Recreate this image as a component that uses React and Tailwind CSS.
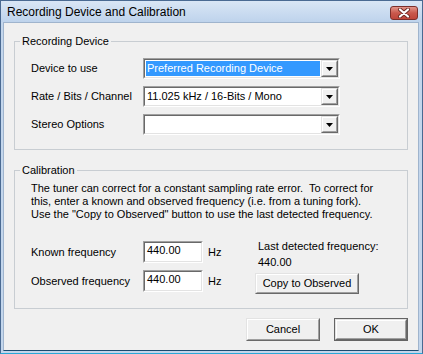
import React from "react";

const font = "font-['Liberation_Sans',Arial,sans-serif] text-[11px] leading-[13px] text-black";

function Sunken({ className = "", children }) {
  return (
    <div className={`border border-t-[#a0a0a0] border-l-[#a0a0a0] border-r-white border-b-white ${className}`}>
      <div className="h-full border border-t-[#696969] border-l-[#696969] border-r-[#e3e3e3] border-b-[#e3e3e3] bg-white flex">
        {children}
      </div>
    </div>
  );
}

function Raised({ className = "", children }) {
  return (
    <div className={`border border-t-[#e3e3e3] border-l-[#e3e3e3] border-r-[#696969] border-b-[#696969] bg-[#f0f0f0] ${className}`}>
      <div className="h-full border border-t-white border-l-white border-r-[#a0a0a0] border-b-[#a0a0a0] flex items-center justify-center">
        {children}
      </div>
    </div>
  );
}

function Combo({ value, selected }) {
  return (
    <Sunken className="w-[197px] h-[21px]">
      <div className="flex-1 p-[1px] flex">
        <div
          className={`flex-1 flex items-center pl-[1px] whitespace-nowrap overflow-hidden ${
            selected ? "bg-[#3399ff] text-white" : ""
          }`}
        >
          {value}
        </div>
      </div>
      <Raised className="w-[17px] h-full">
        <svg width="7" height="4" viewBox="0 0 7 4">
          <polygon points="0,0 7,0 3.5,4" fill="#000" />
        </svg>
      </Raised>
    </Sunken>
  );
}

function Group({ title, className = "", children }) {
  return (
    <fieldset className={`border border-[#c8cdd2] ${className}`}>
      <legend className="ml-[-11px] px-[2px] leading-[13px]">{title}</legend>
      {children}
    </fieldset>
  );
}

function FieldRow({ label, children }) {
  return (
    <div className="flex items-center">
      <div className="w-[112px]">{label}</div>
      {children}
    </div>
  );
}

export default function App() {
  return (
    <div className={`w-[423px] h-[354px] flex flex-col bg-[#c3d6ec] border border-[#4a6a92] border-b-[#29a8d8] ${font}`}>
      {/* title bar */}
      <div className="h-[21px] flex items-center justify-between pl-[6px] pr-[4px] bg-gradient-to-b from-[#d9e6f5] to-[#bed3ec]">
        <span className="text-[12px] font-['Liberation_Sans',Arial,sans-serif] pt-[1px]">
          Recording Device and Calibration
        </span>
        <div className="w-[28px] h-[14px] mt-[2px] rounded-[3px] border border-[#7b2f2a] bg-gradient-to-b from-[#e2958a] via-[#c9584c] to-[#c0463a] flex items-center justify-center">
          <svg width="14" height="10" viewBox="0 0 14 10">
            <path d="M3 1.5 L11 8.5 M11 1.5 L3 8.5" stroke="#6b2a24" strokeWidth="4" strokeLinecap="round" />
            <path d="M3 1.5 L11 8.5 M11 1.5 L3 8.5" stroke="#fff" strokeWidth="2.2" strokeLinecap="round" />
          </svg>
        </div>
      </div>

      {/* body */}
      <div className="flex-1 ml-[2px] mr-[3px] mb-[2px] border border-[#9fb4cd] border-b-[#1d4a6e] bg-[#f0f0f0] px-[10px] flex flex-col">
        <Group title="Recording Device" className="mt-[12px] pt-[10px] pb-[14px] pl-[16px]">
          <div className="flex flex-col gap-[7px]">
            <FieldRow label="Device to use">
              <Combo value="Preferred Recording Device" selected />
            </FieldRow>
            <FieldRow label="Rate / Bits / Channel">
              <Combo value="11.025 kHz / 16-Bits / Mono" />
            </FieldRow>
            <FieldRow label="Stereo Options">
              <Combo value="" />
            </FieldRow>
          </div>
        </Group>

        <Group title="Calibration" className="mt-[14px] pt-[5px] pb-[14px] pl-[16px]">
          <div className="whitespace-pre">
            <div>The tuner can correct for a constant sampling rate error.  To correct for</div>
            <div>this, enter a known and observed frequency (i.e. from a tuning fork).</div>
            <div>Use the "Copy to Observed" button to use the last detected frequency.</div>
          </div>

          <div className="flex mt-[19px]">
            <div className="flex flex-col gap-[7px] pt-[1px] w-[224px]">
              <FieldRow label="Known frequency">
                <Sunken className="w-[60px] h-[22px]">
                  <div className="pl-[2px] pt-[1px]">440.00</div>
                </Sunken>
                <span className="ml-[5px]">Hz</span>
              </FieldRow>
              <FieldRow label="Observed frequency">
                <Sunken className="w-[60px] h-[22px]">
                  <div className="pl-[2px] pt-[1px]">440.00</div>
                </Sunken>
                <span className="ml-[5px]">Hz</span>
              </FieldRow>
            </div>
            <div className="flex flex-col">
              <div className="pl-[3px]">Last detected frequency:</div>
              <div className="pl-[3px] mt-[3px]">440.00</div>
              <Raised className="mt-[4px] w-[104px] h-[21px]">Copy to Observed</Raised>
            </div>
          </div>
        </Group>

        <div className="flex justify-end gap-[14px] mt-[9px]">
          <Raised className="w-[74px] h-[23px]">Cancel</Raised>
          <div className="border border-[#646464]">
            <Raised className="w-[72px] h-[21px]">OK</Raised>
          </div>
        </div>
      </div>
    </div>
  );
}
